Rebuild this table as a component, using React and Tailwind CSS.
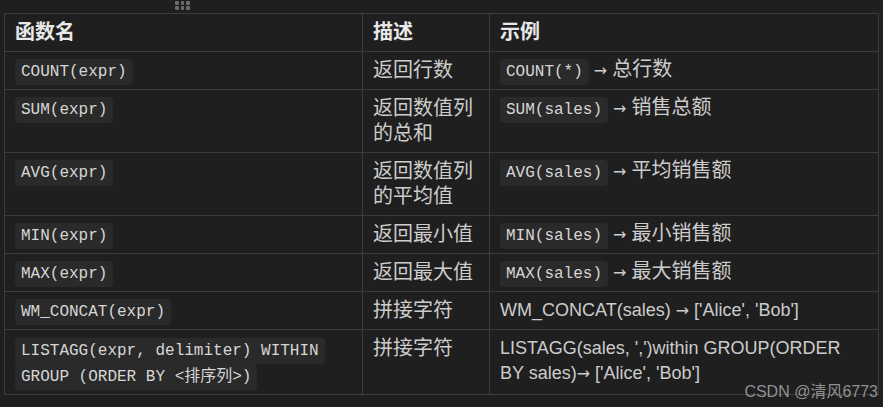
import React from 'react'

const mono = "font-['Liberation_Mono','DejaVu_Sans_Mono','Noto_Sans_CJK_SC',monospace]"

function Code({ children }) {
  return (
    <code
      className={`${mono} text-[16px] leading-[0] bg-[#2a2a2a] text-[#d6d6d6] rounded-[4px] px-[6px] py-[4px] [box-decoration-break:clone]`}
    >
      {children}
    </code>
  )
}

const zh = s => <span className="text-[20px] leading-[0]">{s}</span>
const arrow = <span className="font-['DejaVu_Sans',sans-serif] text-[16px] leading-[0]">→</span>

const ROWS = [
  { fn: <Code>COUNT(expr)</Code>, desc: '返回行数', ex: <><Code>COUNT(*)</Code> {arrow} {zh('总行数')}</> },
  { fn: <Code>SUM(expr)</Code>, desc: '返回数值列的总和', ex: <><Code>SUM(sales)</Code> {arrow} {zh('销售总额')}</> },
  { fn: <Code>AVG(expr)</Code>, desc: '返回数值列的平均值', ex: <><Code>AVG(sales)</Code> {arrow} {zh('平均销售额')}</> },
  { fn: <Code>MIN(expr)</Code>, desc: '返回最小值', ex: <><Code>MIN(sales)</Code> {arrow} {zh('最小销售额')}</> },
  { fn: <Code>MAX(expr)</Code>, desc: '返回最大值', ex: <><Code>MAX(sales)</Code> {arrow} {zh('最大销售额')}</> },
  { fn: <Code>WM_CONCAT(expr)</Code>, desc: '拼接字符', ex: <>WM_CONCAT(sales) {arrow} ['Alice', 'Bob']</> },
  {
    fn: <div className="leading-[26px]"><Code>LISTAGG(expr, delimiter) WITHIN GROUP (ORDER BY &lt;排序列&gt;)</Code></div>,
    desc: '拼接字符',
    ex: <>LISTAGG(sales, ',')within GROUP(ORDER BY sales){arrow} ['Alice', 'Bob']</>,
  },
]

export default function App() {
  const cell = 'border border-[#3c3c3c] align-top px-[10px] pt-[6px] pb-[6px] leading-[25px]'
  return (
    <div className="relative w-[883px] h-[407px] overflow-hidden bg-[#1f1f1f] text-[#cccccc] font-['Liberation_Sans','Noto_Sans_CJK_SC',sans-serif] text-[18px]">
      <div className="h-[13px] pl-[175px] pt-[1px]">
        <div className="grid grid-cols-3 gap-x-[2px] gap-y-[1.5px] w-[15px]">
          {[0, 1, 2, 3, 4, 5].map(i => (
            <span key={i} className="w-[3.5px] h-[3.5px] rounded-[1px] bg-[#6b6b6b]" />
          ))}
        </div>
      </div>

      <table className="ml-[4px] w-[874px] table-fixed border-collapse">
        <colgroup>
          <col className="w-[358px]" />
          <col className="w-[127px]" />
          <col className="w-[389px]" />
        </colgroup>
        <thead>
          <tr className="text-[20px] font-bold text-[#e8e8e8] text-left">
            <th className={`${cell} pb-[5px]`}>函数名</th>
            <th className={`${cell} pb-[5px]`}>描述</th>
            <th className={`${cell} pb-[5px]`}>示例</th>
          </tr>
        </thead>
        <tbody>
          {ROWS.map((r, i) => (
            <tr key={i}>
              <td className={cell}>{r.fn}</td>
              <td className={`${cell} text-[20px]`}>{r.desc}</td>
              <td className={cell}>{r.ex}</td>
            </tr>
          ))}
        </tbody>
      </table>

      <div className="absolute right-[5px] top-[382px] text-[16px] leading-[20px] text-[#a0a0a0]/90 pointer-events-none">
        CSDN @清风6773
      </div>
    </div>
  )
}
